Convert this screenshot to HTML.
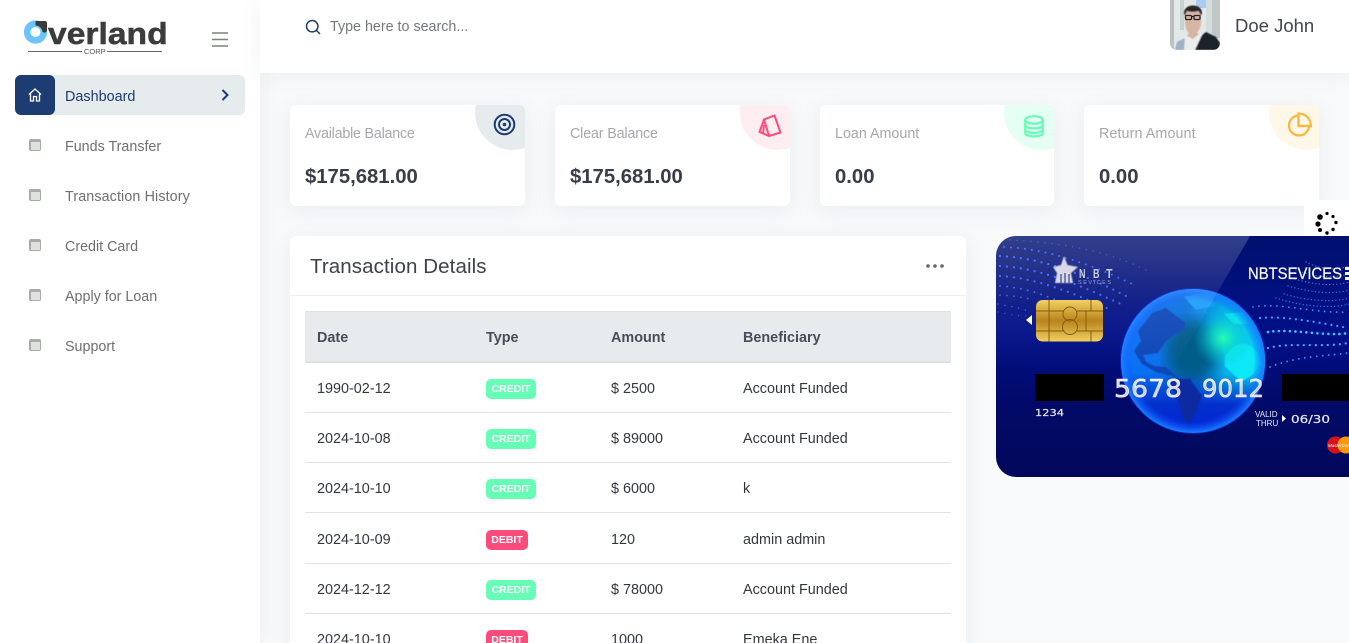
<!DOCTYPE html>
<html><head><meta charset="utf-8"><style>
*{box-sizing:border-box}
html,body{margin:0;padding:0;width:1349px;height:643px;overflow:hidden;background:#f7f9fa;font-family:"Liberation Sans",sans-serif}
#root{position:relative;width:1349px;height:643px;overflow:hidden;background:#f7f9fa}
.a{position:absolute;white-space:nowrap}
#side{left:0;top:0;width:260px;height:643px;background:#fff;box-shadow:0 0 20px rgba(90,100,130,.08)}
#top{left:260px;top:0;width:1089px;height:73px;background:#fff;box-shadow:0 0 20px rgba(90,100,130,.08)}
.nav{left:65px;font-size:14.3px;line-height:20px;color:#6f6f6f}
.ci{left:29px;width:12px;height:12px;background:#a9aaa9;border-radius:2px}
.ci:after{content:"";position:absolute;left:1.500px;top:3px;width:9px;height:7.500px;background:#dfe1df}
.st{top:105px;height:101px;background:#fff;border-radius:6px;box-shadow:0 4px 20px rgba(90,100,130,.08);overflow:hidden}
.st .c{position:absolute;right:-25px;top:-30px;width:75px;height:75px;border-radius:50%}
.st .l{position:absolute;left:15px;top:19px;font-size:14.3px;line-height:20px;color:#a8a8ac}
.st .v{position:absolute;left:15px;top:59px;font-size:20.3px;line-height:26px;font-weight:bold;color:#3a3c4a}
.st svg{position:absolute}
#tc{left:290px;top:236px;width:676px;height:420px;background:#fff;border-radius:6px;box-shadow:0 4px 20px rgba(90,100,130,.08)}
.hl{left:305px;width:646px;height:1px;background:#e2e3e6}
.t{font-size:14.4px;line-height:20px;color:#35373f}
.th{font-size:14.4px;line-height:20px;color:#4a4d58;font-weight:bold}
.b{left:486px;height:20px;border-radius:5px;color:#fff;font-size:10.5px;line-height:20px;font-weight:bold;text-align:center}
.cr{width:50px;background:#66fdb6}.de{width:42px;background:#fd4b7c}
</style></head><body><div id="root">
<div class="a" id="side"></div>
<div class="a" id="top"></div>

<!-- logo -->
<svg class="a" style="left:23px;top:20px" width="26" height="26" viewBox="0 0 26 26"><circle cx="12.500" cy="12" r="8.300" fill="none" stroke="#6cc4fa" stroke-width="6.600"/><path d="M12.500 1H22a2 2 0 0 1 2 2v8a3 3 0 0 1-3 1.500c-1-.5-1-.5-1.500-.5a7 7 0 0 0-7-6.500z" fill="#3b3b3c"/></svg>
<div class="a" style="left:48px;top:19px;font-size:31px;line-height:30px;font-weight:bold;color:#3c3c3d;-webkit-text-stroke:.5px #3c3c3d;transform-origin:0 0;transform:scaleX(1.085)">verland</div>
<div class="a" style="left:28px;top:51px;width:54px;height:1px;background:#666"></div>
<div class="a" style="left:107px;top:51px;width:55px;height:1px;background:#666"></div>
<div class="a" style="left:84px;top:47px;font-size:7.500px;line-height:10px;color:#555">CORP</div>
<svg class="a" style="left:212px;top:32px" width="16" height="15"><path d="M0 1h16M0 7.500h16M0 14h16" stroke="#7d8279" stroke-width="1.600"/></svg>

<!-- nav -->
<div class="a" style="left:15px;top:75px;width:230px;height:40px;background:#e6ebee;border-radius:6px"></div>
<div class="a" style="left:15px;top:75px;width:40px;height:40px;background:#1c3c72;border-radius:6px"></div>
<svg class="a" style="left:28px;top:88px" width="14" height="14" viewBox="0 0 14 14" fill="none" stroke="#fff" stroke-width="1.300"><path d="M1 6.500L7 1l6 5.500M2.500 5.500V13h3V8.500h3V13h3V5.500"/></svg>
<div class="a nav" style="top:87px;color:#1c3c72;font-size:14.4px">Dashboard</div>
<svg class="a" style="left:221px;top:89px" width="8" height="12" fill="none" stroke="#1c3c72" stroke-width="2"><path d="M1.500 1l5 5-5 5"/></svg>
<div class="a ci" style="top:139px"></div><div class="a nav" style="top:137px">Funds Transfer</div>
<div class="a ci" style="top:189px"></div><div class="a nav" style="top:187px;letter-spacing:.12px">Transaction History</div>
<div class="a ci" style="top:239px"></div><div class="a nav" style="top:237px">Credit Card</div>
<div class="a ci" style="top:289px"></div><div class="a nav" style="top:287px">Apply for Loan</div>
<div class="a ci" style="top:339px"></div><div class="a nav" style="top:337px">Support</div>

<!-- top bar -->
<svg class="a" style="left:305px;top:19px" width="16" height="16" fill="none" stroke="#1c3c72" stroke-width="1.500"><circle cx="7.200" cy="7.200" r="5.700"/><path d="M11.500 11.500l3.500 3.500"/></svg>
<div class="a" style="left:330px;top:17px;font-size:14.3px;line-height:20px;color:#76787e">Type here to search...</div>
<svg class="a" style="left:1170px;top:0" width="50" height="50" viewBox="0 0 50 50"><defs><clipPath id="av"><path d="M0 0h50v43a7 7 0 0 1-7 7H7a7 7 0 0 1-7-7z"/></clipPath><filter id="bl"><feGaussianBlur stdDeviation=".6"/></filter></defs><g clip-path="url(#av)"><rect width="50" height="50" fill="#e3e8e8"/><rect x="0" y="0" width="4" height="50" fill="#b9c2c1"/><rect x="10" y="0" width="4" height="30" fill="#c9d0d0"/><rect x="26" y="0" width="10" height="8" fill="#a9cdf0"/><rect x="36" y="0" width="6" height="38" fill="#d5dcdc"/><rect x="42" y="0" width="8" height="38" fill="#bfc8c7"/><g filter="url(#bl)"><path d="M5 50l2-8 8-4 1 12z" fill="#9fb0c8"/><path d="M14 50l1-14 8-2 9-1 2 4-6 13z" fill="#eceded"/><path d="M25 50l7-15 4-3 10 5 4 6v7z" fill="#1e2129"/><path d="M15 12c0-5 16-5 16 0v10c0 6-4 13-8 13-5 0-8-7-8-13z" fill="#d6b5a3"/><path d="M21 30l8 4-6 5-6-3z" fill="#d6b5a3"/><path d="M14 13c0-10 18-10 18 0l-1 3c-1-3-2-5-3-5-4 1-7 1-11 0-1 1-1 3-2 5z" fill="#2a2527"/></g><g fill="none" stroke="#25242a" stroke-width="1.300"><rect x="15.500" y="15.500" width="6" height="4" rx="1"/><rect x="24" y="15.500" width="6" height="4" rx="1"/><path d="M21.500 16.500H24"/></g></g></svg>
<div class="a" style="left:1235px;top:14px;font-size:18.5px;line-height:24px;color:#43454f">Doe John</div>

<!-- stat cards -->
<div class="a st" style="left:290px;width:235px"><div class="c" style="background:#e6ebee"></div><div class="l" style="letter-spacing:-.22px">Available Balance</div><div class="v">$175,681.00</div>
<svg style="left:203px;top:8px" width="23" height="23" fill="none" stroke="#1c3c72"><circle cx="11.500" cy="11.500" r="9.800" stroke-width="2"/><circle cx="11.500" cy="11.500" r="5.500" stroke-width="2"/><circle cx="11.500" cy="11.500" r="1.800" fill="#1c3c72" stroke="none"/></svg></div>
<div class="a st" style="left:555px;width:235px"><div class="c" style="background:#ffeef1"></div><div class="l" style="letter-spacing:-.15px">Clear Balance</div><div class="v">$175,681.00</div>
<svg style="left:203px;top:9px" width="24" height="24" fill="none" stroke="#fd4b7c" stroke-width="2" stroke-linejoin="round"><path d="M6 5.400L16.500 1.500 22.500 18.500 11 22z"/><path d="M6 5.400L1.500 18 11 22M6 11L5 19.500"/></svg></div>
<div class="a st" style="left:820px;width:234px"><div class="c" style="background:#e6fff4"></div><div class="l">Loan Amount</div><div class="v">0.00</div>
<svg style="left:203px;top:10px" width="22" height="23" fill="none" stroke="#66fdb6" stroke-width="2.200"><ellipse cx="11" cy="5" rx="8.800" ry="3.800"/><path d="M2.200 5v13c0 4.500 17.600 4.500 17.600 0V5M2.200 10c0 4.500 17.600 4.500 17.600 0M2.200 14.500c0 4.500 17.600 4.500 17.600 0"/></svg></div>
<div class="a st" style="left:1084px;width:235px"><div class="c" style="background:#fff8e8"></div><div class="l" style="letter-spacing:.1px">Return Amount</div><div class="v">0.00</div>
<svg style="left:203px;top:7px" width="26" height="26" fill="none" stroke="#fdb73e" stroke-width="2.200"><path d="M11.500 3.500a10 10 0 1 0 10.500 10.500H11.500z"/><path d="M11.500 1.500c7 0 12 5 12.500 12.500H11.500z"/></svg></div>

<!-- loader -->
<div class="a" style="left:1304px;top:200px;width:45px;height:45px;background:#fff"></div>
<svg class="a" style="left:1304px;top:200px" width="45" height="45" fill="#000"><circle cx="16" cy="17" r="2.800"/><circle cx="14" cy="24" r="2.600"/><circle cx="16" cy="30" r="2"/><circle cx="23" cy="33" r="1.700"/><circle cx="29" cy="29.500" r="1.700"/><circle cx="32" cy="22.500" r="1.700"/><circle cx="29" cy="16.500" r="1.600"/><circle cx="23" cy="13.500" r="1.600"/></svg>

<!-- transaction card -->
<div class="a" id="tc"></div>
<div class="a" style="left:310px;top:253px;font-size:20.5px;line-height:28px;color:#3f414d;letter-spacing:.1px">Transaction Details</div>
<svg class="a" style="left:925px;top:263px" width="20" height="6" fill="#666"><circle cx="3" cy="3" r="1.800"/><circle cx="10" cy="3" r="1.800"/><circle cx="17" cy="3" r="1.800"/></svg>
<div class="a" style="left:290px;top:295px;width:676px;height:1px;background:#eeeff1"></div>
<div class="a" style="left:305px;top:311px;width:646px;height:52px;background:#e8ebee;border-bottom:2px solid #dde0e4;border-top:1px solid #e0e3e6"></div>
<div class="a th" style="left:317px;top:328px">Date</div><div class="a th" style="left:486px;top:328px">Type</div><div class="a th" style="left:611px;top:328px">Amount</div><div class="a th" style="left:743px;top:328px">Beneficiary</div>

<div class="a t" style="left:317px;top:379px">1990-02-12</div><div class="a b cr" style="top:379px">CREDIT</div><div class="a t" style="left:611px;top:379px">$ 2500</div><div class="a t" style="left:743px;top:379px">Account Funded</div>
<div class="a hl" style="top:412px"></div>
<div class="a t" style="left:317px;top:429px">2024-10-08</div><div class="a b cr" style="top:429px">CREDIT</div><div class="a t" style="left:611px;top:429px">$ 89000</div><div class="a t" style="left:743px;top:429px">Account Funded</div>
<div class="a hl" style="top:462px"></div>
<div class="a t" style="left:317px;top:479px">2024-10-10</div><div class="a b cr" style="top:479px">CREDIT</div><div class="a t" style="left:611px;top:479px">$ 6000</div><div class="a t" style="left:743px;top:479px">k</div>
<div class="a hl" style="top:512px"></div>
<div class="a t" style="left:317px;top:530px">2024-10-09</div><div class="a b de" style="top:530px">DEBIT</div><div class="a t" style="left:611px;top:530px">120</div><div class="a t" style="left:743px;top:530px">admin admin</div>
<div class="a hl" style="top:563px"></div>
<div class="a t" style="left:317px;top:580px">2024-12-12</div><div class="a b cr" style="top:580px">CREDIT</div><div class="a t" style="left:611px;top:580px">$ 78000</div><div class="a t" style="left:743px;top:580px">Account Funded</div>
<div class="a hl" style="top:613px"></div>
<div class="a t" style="left:317px;top:630px">2024-10-10</div><div class="a b de" style="top:630px">DEBIT</div><div class="a t" style="left:611px;top:630px">1000</div><div class="a t" style="left:743px;top:630px">Emeka Ene</div>

<!-- credit card -->
<svg class="a" style="left:996px;top:236px" width="353" height="241" viewBox="0 0 353 241">
<defs>
<clipPath id="cc"><path d="M20 0H353V241H20A20 20 0 0 1 0 221V20A20 20 0 0 1 20 0z"/></clipPath>
<clipPath id="gc"><circle cx="197" cy="125" r="72"/></clipPath>
<linearGradient id="bg" x1="0" y1="0" x2="0" y2="1"><stop offset="0" stop-color="#00106e"/><stop offset=".4" stop-color="#010f88"/><stop offset=".7" stop-color="#010a68"/><stop offset="1" stop-color="#01085a"/></linearGradient>
<linearGradient id="base" x1="0" y1="0" x2="1" y2="0"><stop offset="0" stop-color="#0a70fa"/><stop offset=".45" stop-color="#0a70e0"/><stop offset=".72" stop-color="#08b0e8"/><stop offset="1" stop-color="#0adcf6"/></linearGradient>
<linearGradient id="dk" x1="0" y1="0" x2="0" y2="1"><stop offset=".58" stop-color="#0330c8" stop-opacity="0"/><stop offset=".8" stop-color="#0330cc"/><stop offset="1" stop-color="#0424d8"/></linearGradient>
<radialGradient id="glow"><stop offset="0" stop-color="#28fcb0"/><stop offset=".4" stop-color="#10e8c8" stop-opacity=".65"/><stop offset="1" stop-color="#08c0e0" stop-opacity="0"/></radialGradient>
<radialGradient id="rim"><stop offset=".84" stop-color="#0a50ff" stop-opacity="0"/><stop offset="1" stop-color="#1a80ff"/></radialGradient>
<linearGradient id="chip" x1="0" y1="0" x2="0" y2="1"><stop offset="0" stop-color="#f2d264"/><stop offset=".5" stop-color="#b8841c"/><stop offset="1" stop-color="#f0d060"/></linearGradient>
<linearGradient id="shine" gradientUnits="userSpaceOnUse" x1="0" y1="0" x2="0" y2="135"><stop offset="0" stop-color="#fff" stop-opacity=".2"/><stop offset=".5" stop-color="#fff" stop-opacity=".07"/><stop offset="1" stop-color="#fff" stop-opacity="0"/></linearGradient>
<linearGradient id="dg" x1="0" y1="0" x2="0" y2="1"><stop offset="0" stop-color="#fff"/><stop offset=".55" stop-color="#c8ccdc"/><stop offset="1" stop-color="#f4f6fc"/></linearGradient>
<filter id="b3"><feGaussianBlur stdDeviation="7"/></filter>
<filter id="b1"><feGaussianBlur stdDeviation=".5"/></filter>
</defs>
<g clip-path="url(#cc)">
<rect width="353" height="241" fill="url(#bg)"/>
<g fill="none" stroke="#2c5aff" stroke-linecap="round" stroke-dasharray="0 7">
<path d="M8 11C50 12 100 30 140 50" stroke-width="2"/>
<path d="M4 20C50 22 95 42 130 60" stroke-width="2.300"/>
<path d="M4 30C45 32 85 50 125 68" stroke-width="2.300"/>
<path d="M4 40C40 42 75 56 115 74" stroke-width="2.200"/>
<path d="M4 50C30 52 45 58 60 64" stroke-width="2"/>
<path d="M4 59C20 60 30 62 38 64" stroke-width="1.800"/>
<path d="M2 68C14 70 24 72 36 76" stroke-width="1.500"/>
<path d="M2 76C12 78 20 80 30 80" stroke-width="1.200"/>
<path d="M14 4C60 6 110 14 150 34" stroke-width="1.400" opacity=".7"/>
</g>
<g fill="none" stroke-linecap="round">
<g stroke="#1c7cf8" stroke-dasharray="0 3.500" stroke-width="1.400">
<path d="M310 26C325 34 340 34 353 30"/><path d="M300 34C320 42 340 42 353 38"/><path d="M296 42C320 50 340 50 353 46"/><path d="M292 50C320 58 340 58 353 54"/><path d="M288 58C315 66 340 66 353 62"/><path d="M280 62C310 72 340 72 353 68"/>
</g>
<path d="M257 71C285 66 320 78 352 76" stroke="#2f9cff" stroke-width="1.800" stroke-dasharray="0 6"/>
<path d="M264 82C284 80 311 84 352 92" stroke="#35a8ff" stroke-width="2.200" stroke-dasharray="0 6"/>
<path d="M272 96C294 92 331 101 352 97" stroke="#38c8ff" stroke-width="2.600" stroke-dasharray="0 5.500"/>
<path d="M272 112C294 106 327 112 352 107" stroke="#38b0ff" stroke-width="2.300" stroke-dasharray="0 6"/>
<path d="M274 131C301 120 330 120 352 117" stroke="#2f8cff" stroke-width="1.900" stroke-dasharray="0 6"/>
</g>
<!-- globe -->
<circle cx="197" cy="125" r="73" fill="#0a3cff" opacity=".5"/>
<g clip-path="url(#gc)">
<rect x="125" y="53" width="144" height="144" fill="url(#base)"/>
<ellipse cx="196" cy="116" rx="26" ry="32" fill="#045c88" filter="url(#b3)"/>
<rect x="125" y="53" width="144" height="144" fill="url(#dk)"/>
<g fill="#0c46b8" filter="url(#b1)">
<path d="M156 77L170 72 183 82 189 86 189 93 178 99 170 105 162 117 147 119 150 126 158 130 170 131 178 138 187 146 176 140 160 136 146 128 138 115 145 105 142 95 150 85z"/>
<path d="M172 143L194 143 206 160 200 176 192 190 186 180 182 165z" fill="#0a2aa0"/>
</g>
<path d="M229 121C234 112 242 106 250 108 258 110 264 118 265 128 262 134 256 140 245 146 240 140 232 134 229 130z" fill="#0ae8f6" filter="url(#b1)"/>
<path d="M228 78L246 76 254 88 238 88z" fill="#0ce8f0" filter="url(#b1)"/>
<path d="M187 60L216 57 218 70 200 74z" fill="#1a9cfa" filter="url(#b1)"/>
<circle cx="227" cy="102" r="30" fill="url(#glow)"/>
</g>
<circle cx="197" cy="125" r="72" fill="url(#rim)"/>
<path d="M0 0H254L176 135H0z" fill="url(#shine)"/>
<!-- NBT logo -->
<path d="M68 20L71.500 29 82 31 75 37 77 47H59L61 37 57 31 65 29z" fill="#d8d8e6" filter="url(#b1)"/>
<path d="M65 38v9M69 37v10M73 38v9" stroke="#3a4490" stroke-width="1.200"/>
<g font-family="Liberation Sans" font-weight="bold" font-size="13" fill="#c8cce0">
<text x="83" y="42" textLength="6.500" lengthAdjust="spacingAndGlyphs">N</text><text x="97" y="42" textLength="6.500" lengthAdjust="spacingAndGlyphs">B</text><text x="110" y="42" textLength="6.500" lengthAdjust="spacingAndGlyphs">T</text></g>
<text x="82" y="48" font-family="Liberation Sans" font-size="5.500" fill="#9ca2c6" textLength="33" lengthAdjust="spacing">SEVICES</text>
<text x="252" y="43" font-family="Liberation Sans" font-size="17" fill="#fff" stroke="#fff" stroke-width=".2" textLength="94" lengthAdjust="spacingAndGlyphs">NBTSEVICES</text>
<rect x="349" y="31" width="4" height="3" fill="#fff"/><rect x="349" y="36" width="4" height="3" fill="#fff"/><rect x="349" y="41" width="4" height="3" fill="#fff"/>
<!-- chip -->
<rect x="40" y="64" width="67" height="41.500" rx="6.500" fill="url(#chip)"/>
<g fill="none" stroke="#8a5a0e" stroke-width="1"><path d="M40 75H68M80 75H107M40 95H67M81 95H107M53 64V105.500M95 64V75M95 95V105.500M90 75V95"/><circle cx="74" cy="78" r="7"/><circle cx="74" cy="91" r="7.500"/></g>
<path d="M30 84l6-5v10z" fill="#fff"/>
<rect x="39" y="138" width="69" height="27" fill="#000"/>
<rect x="286" y="138" width="67" height="27" fill="#000"/>
<text x="118" y="161" font-family="DejaVu Sans" font-size="25" fill="url(#dg)" stroke="#f0f2fa" stroke-width=".6" textLength="68" lengthAdjust="spacingAndGlyphs">5678</text>
<text x="206" y="161" font-family="DejaVu Sans" font-size="25" fill="url(#dg)" stroke="#f0f2fa" stroke-width=".6" textLength="62" lengthAdjust="spacingAndGlyphs">9012</text>
<text x="39" y="180" font-family="DejaVu Sans" font-size="10" fill="#e8ebf6" stroke="#e8ebf6" stroke-width=".2" textLength="29" lengthAdjust="spacingAndGlyphs">1234</text>
<text x="259" y="181" font-family="Liberation Sans" font-size="8" fill="#e8ebf6">VALID</text>
<text x="260" y="190" font-family="Liberation Sans" font-size="8" fill="#e8ebf6">THRU</text>
<path d="M286 179l4 3.500-4 3.500z" fill="#fff"/>
<text x="295" y="187" font-family="DejaVu Sans" font-size="11" fill="#e8ebf6" stroke="#e8ebf6" stroke-width=".2" textLength="39" lengthAdjust="spacingAndGlyphs">06/30</text>
<circle cx="339.500" cy="209" r="8.500" fill="#d8121a"/><circle cx="350" cy="209" r="8.500" fill="#f59a10"/>
<text x="332" y="211" font-family="Liberation Sans" font-style="italic" font-size="4.500" fill="#fff">MasterCard</text>
</g>
</svg>
</div></body></html>
